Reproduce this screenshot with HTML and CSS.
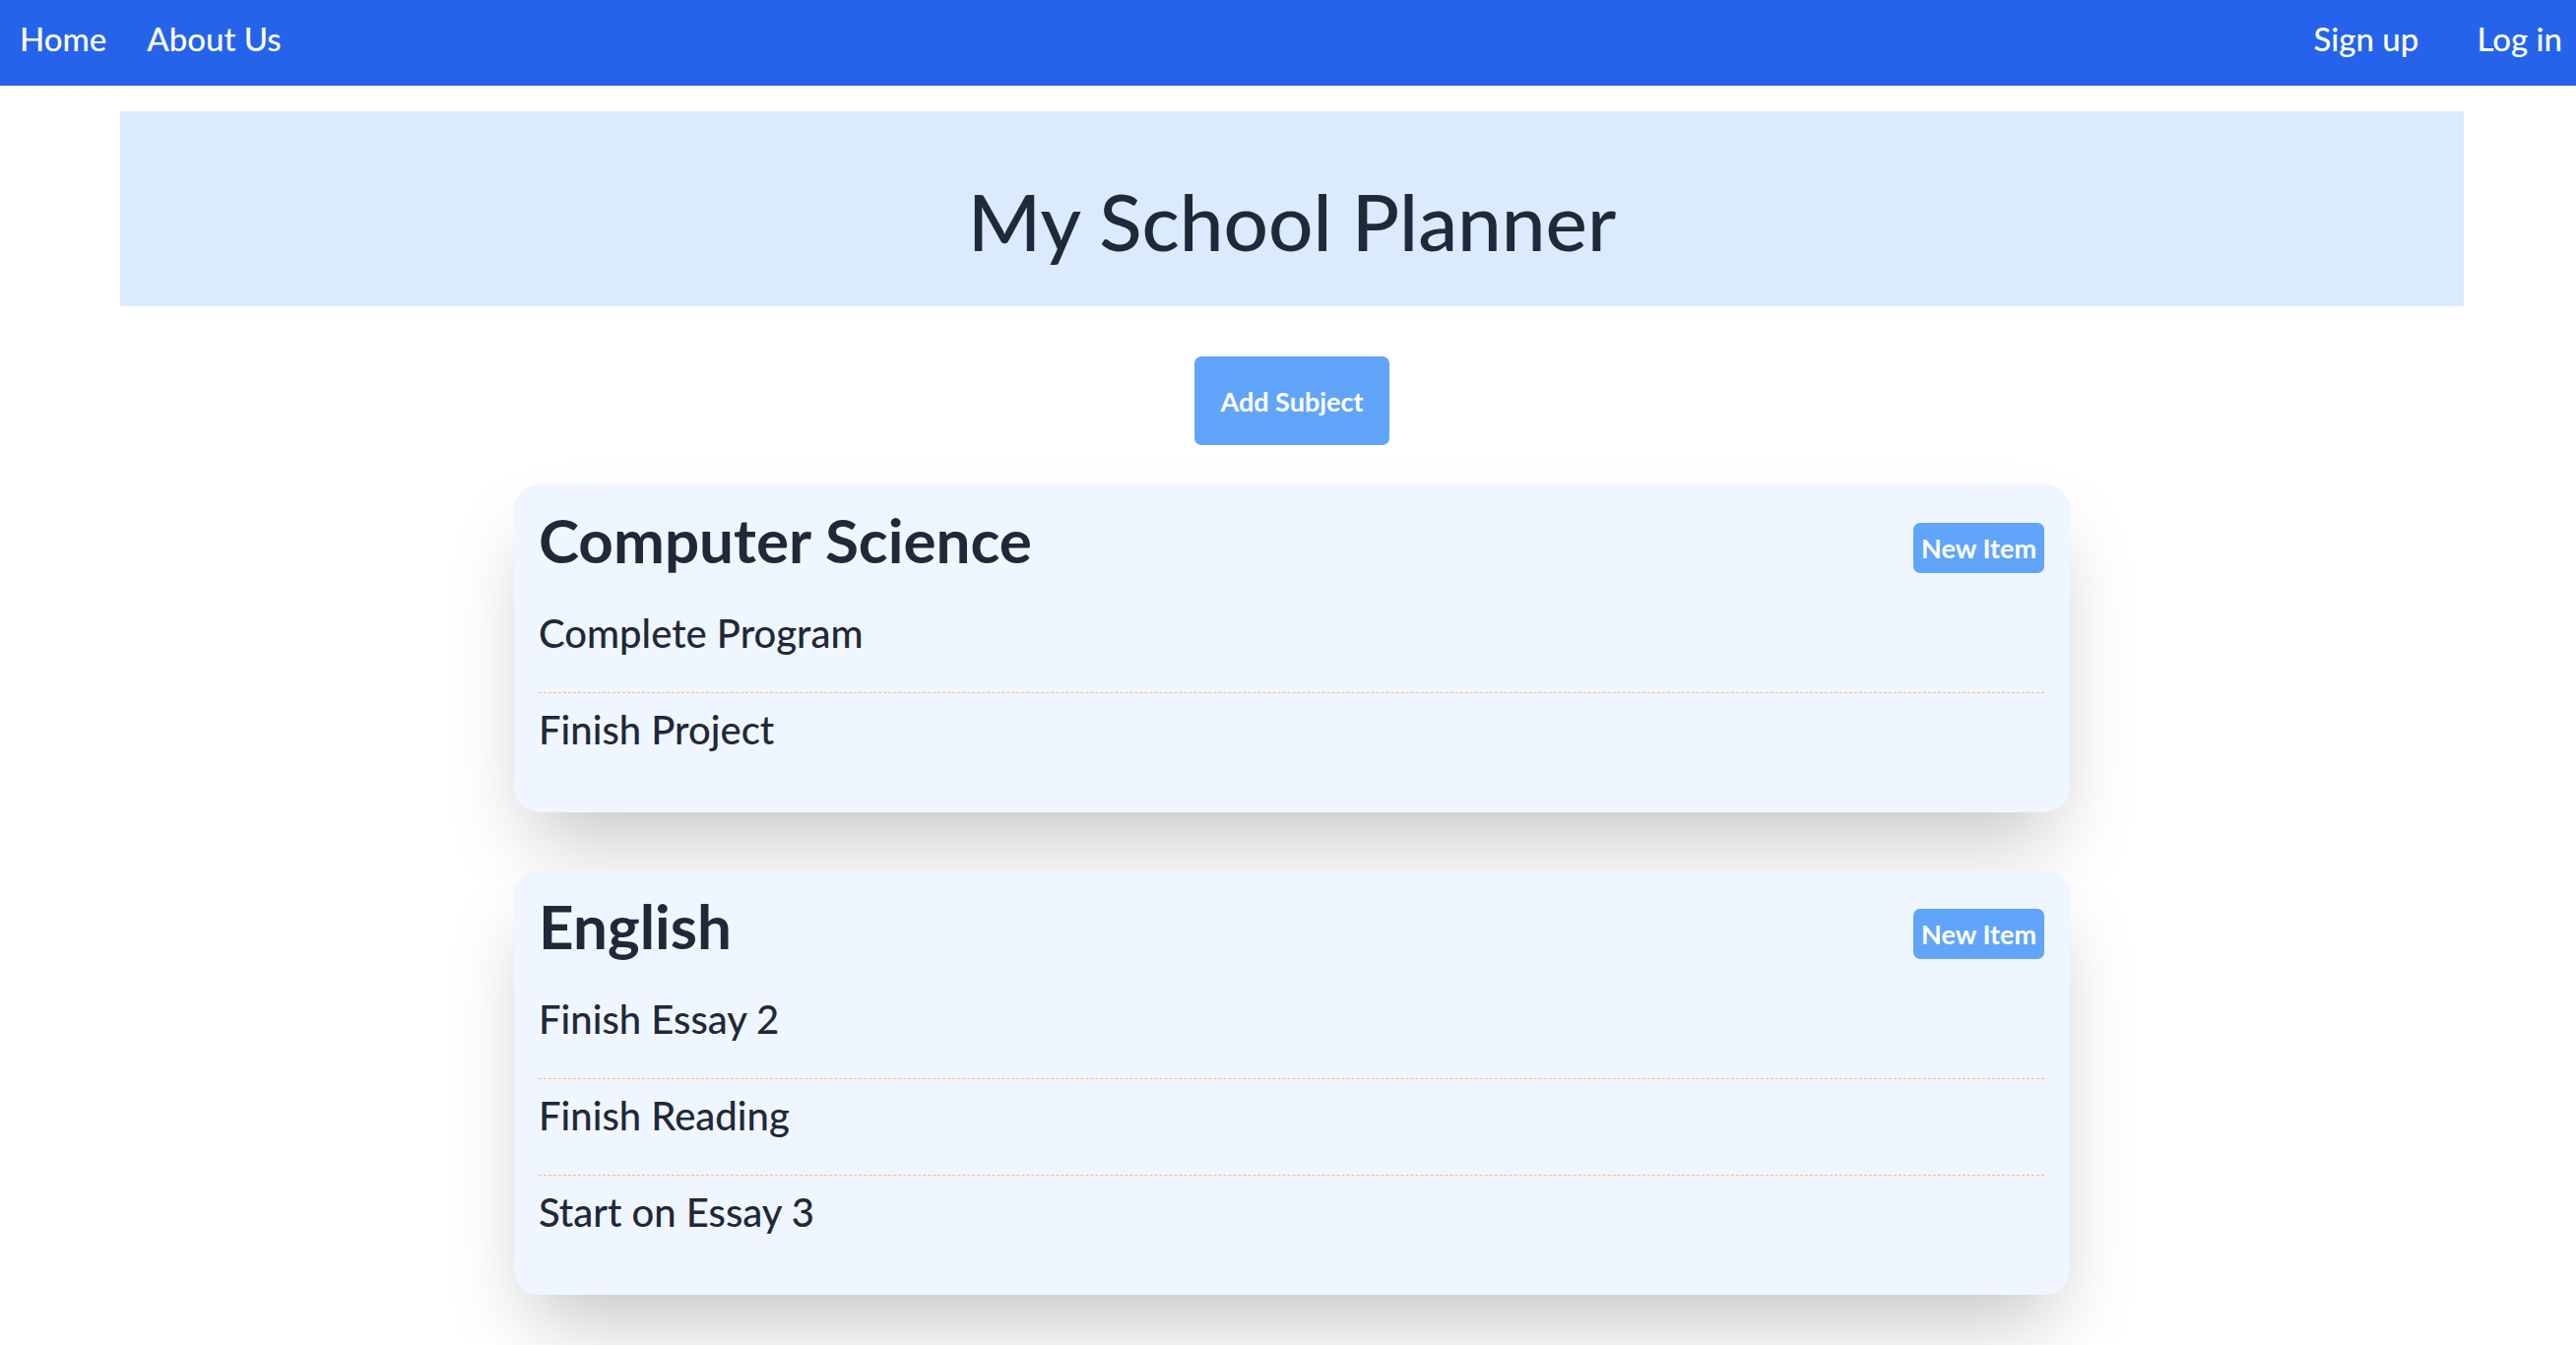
FILE: index.html
```html
<!DOCTYPE html>
<html lang="en">
<head>
<meta charset="utf-8">
<title>My School Planner</title>
<link rel="stylesheet" href="styles.css">
</head>
<body>
<nav class="topnav">
  <div class="nav-left">
    <a class="nav-link" href="#">Home</a>
    <a class="nav-link" href="#">About Us</a>
  </div>
  <div class="nav-right">
    <a class="nav-link" href="#">Sign up</a>
    <a class="nav-link" href="#">Log in</a>
  </div>
</nav>
<main class="page">
  <header class="hero">
    <h1 class="hero-title">My School Planner</h1>
  </header>
  <button class="add-btn" type="button">Add Subject</button>
  <section class="card">
    <div class="card-head">
      <h2 class="card-title">Computer Science</h2>
      <button class="new-btn" type="button">New Item</button>
    </div>
    <ul class="items">
      <li class="item">Complete Program</li>
      <li class="item">Finish Project</li>
    </ul>
  </section>
  <section class="card">
    <div class="card-head">
      <h2 class="card-title">English</h2>
      <button class="new-btn" type="button">New Item</button>
    </div>
    <ul class="items">
      <li class="item">Finish Essay 2</li>
      <li class="item">Finish Reading</li>
      <li class="item">Start on Essay 3</li>
    </ul>
  </section>
</main>
</body>
</html>
```
FILE: styles.css
```css
* { box-sizing: border-box; }
html, body { margin: 0; padding: 0; background: #ffffff; }
body {
  font-family: Lato, "Noto Sans", sans-serif;
  color: #1f2937;
}
.topnav {
  height: 87px;
  background: #2563eb;
  display: flex;
  justify-content: space-between;
  align-items: flex-start;
  padding: 16px 14px 0 20px;
}
.nav-left, .nav-right { display: flex; }
.nav-left { gap: 41px; }
.nav-right { gap: 59px; }
.nav-link {
  color: #ffffff;
  text-decoration: none;
  font-size: 33px;
  font-weight: 500;
  line-height: 47px;
}
.page {
  margin: 26px 0 0 122px;
  padding-bottom: 90px;
  width: 2380px;
  display: flex;
  flex-direction: column;
  align-items: center;
}
.hero {
  width: 100%;
  background: #dbeafe;
  padding: 71px 0 47px;
  text-align: center;
}
.hero-title {
  margin: 0;
  font-size: 80px;
  line-height: 80px;
  font-weight: 500;
}
.add-btn {
  margin-top: 51px;
  height: 90px;
  padding: 0 26px;
  border: 0;
  border-radius: 7px;
  background: #60a5fa;
  color: #ffffff;
  font-family: inherit;
  font-size: 27px;
  font-weight: 700;
}
.card {
  width: 1580px;
  margin-top: 40px;
  padding: 23px 26px 24px 25px;
  background: #eff6ff;
  border-radius: 26px;
  box-shadow: 0 42px 83px -20px rgba(0, 0, 0, 0.25);
}
.card + .card { margin-top: 59px; }
.card-head {
  display: flex;
  justify-content: space-between;
  align-items: flex-start;
  margin-bottom: 24px;
}
.card-title {
  margin: 0;
  font-size: 62px;
  line-height: 67px;
  font-weight: 700;
}
.new-btn {
  margin-top: 16px;
  height: 51px;
  padding: 0 8px;
  border: 0;
  border-radius: 7px;
  background: #60a5fa;
  color: #ffffff;
  font-family: inherit;
  font-size: 27px;
  font-weight: 700;
}
.items { list-style: none; margin: 0; padding: 0; }
.item {
  font-size: 40px;
  line-height: 53px;
  font-weight: 500;
  padding: 11px 0 33px;
  border-bottom: 1px dashed #fdba74;
}
.item:last-child { border-bottom: 0; }
```
